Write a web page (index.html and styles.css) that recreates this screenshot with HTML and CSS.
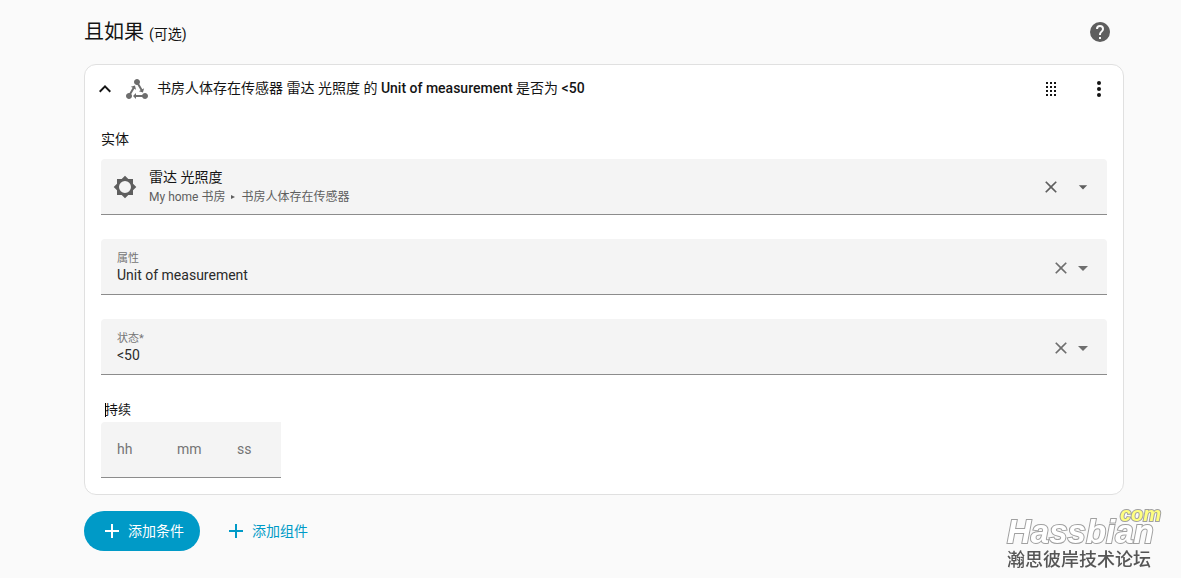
FILE: index.html
```
<!DOCTYPE html>
<html lang="zh-CN">
<head>
    <meta charset="utf-8">
    <title>且如果</title>
    <meta name="viewport" content="width=device-width, initial-scale=1">
    <link rel="stylesheet" href="styles.css">
</head>
<body>
    <main class="section">
        <header class="section-header">
            <h2>且如果 <small>(可选)</small></h2>
            <a class="icon-button help" href="#" aria-label="帮助">
                <svg viewBox="0 0 24 24"><path d="M15.07,11.25L14.17,12.17C13.45,12.89 13,13.5 13,15H11V14.5C11,13.39 11.45,12.39 12.17,11.67L13.41,10.41C13.78,10.05 14,9.55 14,9C14,7.89 13.1,7 12,7A2,2 0 0,0 10,9H8A4,4 0 0,1 12,5A4,4 0 0,1 16,9C16,9.88 15.64,10.67 15.07,11.25M13,19H11V17H13M12,2A10,10 0 0,0 2,12A10,10 0 0,0 12,22A10,10 0 0,0 22,12C22,6.47 17.5,2 12,2Z"/></svg>
            </a>
        </header>

        <section class="card">
            <div class="card-header">
                <button class="chevron" type="button" aria-label="收起">
                    <svg viewBox="0 0 24 24"><path d="M7.41,15.41L12,10.83L16.59,15.41L18,14L12,8L6,14L7.41,15.41Z"/></svg>
                </button>
                <svg class="condition-icon" viewBox="0 0 24 24"><path d="M6.27 17.05C6.72 17.58 7 18.25 7 19C7 20.66 5.66 22 4 22S1 20.66 1 19 2.34 16 4 16C4.18 16 4.36 16 4.53 16.05L7.6 10.69L5.86 9.7L9.95 8.58L11.07 12.67L9.33 11.68L6.27 17.05M20 16C18.7 16 17.6 16.84 17.18 18H11V16L8 19L11 22V20H17.18C17.6 21.16 18.7 22 20 22C21.66 22 23 20.66 23 19S21.66 16 20 16M12 8C12.18 8 12.36 8 12.53 7.95L15.6 13.31L13.86 14.3L17.95 15.42L19.07 11.33L17.33 12.32L14.27 6.95C14.72 6.42 15 5.75 15 5C15 3.34 13.66 2 12 2S9 3.34 9 5 10.34 8 12 8Z"/></svg>
                <h3>书房人体存在传感器 雷达 光照度 的 <b>Unit of measurement</b> 是否为 <b>&lt;50</b></h3>
                <button class="icon-button" type="button" aria-label="拖动">
                    <svg viewBox="0 0 24 24"><path d="M7 5h2v2H7zM11 5h2v2h-2zM15 5h2v2h-2zM7 9h2v2H7zM11 9h2v2h-2zM15 9h2v2h-2zM7 13h2v2H7zM11 13h2v2h-2zM15 13h2v2h-2zM7 17h2v2H7zM11 17h2v2h-2zM15 17h2v2h-2z"/></svg>
                </button>
                <button class="icon-button" type="button" aria-label="菜单">
                    <svg viewBox="0 0 24 24"><circle cx="12" cy="6" r="2"/><circle cx="12" cy="12" r="2"/><circle cx="12" cy="18" r="2"/></svg>
                </button>
            </div>

            <div class="card-content">
                <div class="group-label" id="entity-label">实体</div>
                <div class="field entity">
                    <button class="entity-value" type="button" aria-labelledby="entity-label entity-name">
                        <svg viewBox="0 0 24 24"><path d="M12,18A6,6 0 0,1 6,12A6,6 0 0,1 12,6A6,6 0 0,1 18,12A6,6 0 0,1 12,18M20,15.31L23.31,12L20,8.69V4H15.31L12,0.69L8.69,4H4V8.69L0.69,12L4,15.31V20H8.69L12,23.31L15.31,20H20V15.31Z"/></svg>
                        <span class="entity-text">
                            <span class="primary" id="entity-name">雷达 光照度</span>
                            <span class="secondary">My home 书房 <i></i> 书房人体存在传感器</span>
                        </span>
                    </button>
                    <button class="clear" type="button" aria-label="清除实体">
                        <svg viewBox="0 0 24 24"><path d="M19,6.41L17.59,5L12,10.59L6.41,5L5,6.41L10.59,12L5,17.59L6.41,19L12,13.41L17.59,19L19,17.59L13.41,12L19,6.41Z"/></svg>
                    </button>
                    <button class="toggle" type="button" aria-label="选择实体">
                        <svg viewBox="0 0 24 24"><path d="M7,10L12,15L17,10H7Z"/></svg>
                    </button>
                </div>

                <div class="field">
                    <div class="field-text">
                        <label for="attribute">属性</label>
                        <input id="attribute" type="text" value="Unit of measurement">
                    </div>
                    <button class="clear" type="button" aria-label="清除属性">
                        <svg viewBox="0 0 24 24"><path d="M19,6.41L17.59,5L12,10.59L6.41,5L5,6.41L10.59,12L5,17.59L6.41,19L12,13.41L17.59,19L19,17.59L13.41,12L19,6.41Z"/></svg>
                    </button>
                    <button class="toggle" type="button" aria-label="选择属性">
                        <svg viewBox="0 0 24 24"><path d="M7,10L12,15L17,10H7Z"/></svg>
                    </button>
                </div>

                <div class="field">
                    <div class="field-text">
                        <label for="state">状态*</label>
                        <input id="state" type="text" value="&lt;50">
                    </div>
                    <button class="clear" type="button" aria-label="清除状态">
                        <svg viewBox="0 0 24 24"><path d="M19,6.41L17.59,5L12,10.59L6.41,5L5,6.41L10.59,12L5,17.59L6.41,19L12,13.41L17.59,19L19,17.59L13.41,12L19,6.41Z"/></svg>
                    </button>
                    <button class="toggle" type="button" aria-label="选择状态">
                        <svg viewBox="0 0 24 24"><path d="M7,10L12,15L17,10H7Z"/></svg>
                    </button>
                </div>

                <label class="duration-label" for="hours">持续</label>
                <div class="duration">
                    <input id="hours" type="text" inputmode="numeric" placeholder="hh" aria-label="持续 时">
                    <input type="text" inputmode="numeric" placeholder="mm" aria-label="持续 分">
                    <input type="text" inputmode="numeric" placeholder="ss" aria-label="持续 秒">
                </div>
            </div>
        </section>

        <div class="actions">
            <button class="add filled" type="button">
                <svg viewBox="0 0 24 24"><path d="M19,13H13V19H11V13H5V11H11V5H13V11H19V13Z"/></svg>
                添加条件
            </button>
            <button class="add" type="button">
                <svg viewBox="0 0 24 24"><path d="M19,13H13V19H11V13H5V11H11V5H13V11H19V13Z"/></svg>
                添加组件
            </button>
        </div>
    </main>

    <aside class="watermark">
        <span class="site">Hassbian</span>
        <span class="tld">com</span>
        <span class="forum">瀚思彼岸技术论坛</span>
    </aside>
</body>
</html>
```
FILE: styles.css
```
* {
    box-sizing: border-box;
}
body {
    margin: 0;
    padding: 0 0 0 27px;
    background: #fafafa;
    color: #141414;
    font: 14px/20px Roboto, "Noto Sans CJK SC", sans-serif;
}
button, input {
    font: inherit;
    color: inherit;
    border: 0;
    padding: 0;
    background: none;
}
button {
    cursor: pointer;
}
svg {
    display: block;
    flex: none;
    width: 24px;
    height: 24px;
    fill: currentColor;
}
h2, h3 {
    margin: 0;
    font-weight: 400;
}
.section {
    max-width: 1040px;
    margin: 0 auto;
}
.section-header {
    display: flex;
    align-items: center;
    justify-content: space-between;
    height: 64px;
}
.section-header h2 {
    padding-top: 2px;
    font-size: 20px;
    line-height: 28px;
}
.section-header small {
    font-size: 14px;
}
.icon-button {
    display: flex;
    align-items: center;
    justify-content: center;
    width: 48px;
    height: 48px;
}
.help {
    color: #5e5e5e;
}
.card {
    background: #fff;
    border: 1px solid #e0e0e0;
    border-radius: 12px;
}
.card-header {
    display: flex;
    align-items: center;
    height: 48px;
    padding-left: 8px;
}
.card-header h3 {
    flex: 1;
    padding-bottom: 2px;
    font-size: 14px;
}
.card-header b {
    font-weight: 500;
}
.condition-icon {
    margin: 0 8px;
    color: #6e6e6e;
}
.card-content {
    padding: 16px;
}
.group-label {
    margin-bottom: 10px;
}
.field {
    display: flex;
    align-items: center;
    height: 56px;
    margin-bottom: 24px;
    padding: 0 12px 0 16px;
    background: #f4f4f4;
    border-bottom: 1px solid #8c8c8c;
    border-radius: 4px 4px 0 0;
    color: #2a2a2a;
}
.field-text {
    flex: 1;
    display: flex;
    flex-direction: column;
}
.field-text label {
    padding-top: 2px;
    font-size: 11px;
    line-height: 14px;
    color: #757575;
}
.field-text input {
    width: 100%;
    height: 18px;
    outline: 0;
}
.clear svg {
    width: 20px;
    height: 20px;
}
.clear, .toggle {
    padding-top: 3px;
    color: #6e6e6e;
}
.entity {
    padding-left: 12px;
}
.entity-value {
    flex: 1;
    display: flex;
    align-items: center;
    gap: 12px;
    text-align: left;
    color: #5e5e5e;
}
.entity-text, .entity-text > span {
    display: block;
}
.primary {
    color: #141414;
}
.secondary {
    font-size: 12px;
}
/* small arrow between the area and the device */
.secondary i {
    display: inline-block;
    margin: 0 3px;
    vertical-align: 2px;
    border: solid transparent;
    border-width: 2px 0 2px 4px;
    border-left-color: currentColor;
}
.entity .clear, .entity .toggle {
    padding-top: 0;
    color: #5e5e5e;
}
.entity .clear {
    margin-right: 10px;
}
.entity .toggle svg {
    width: 20px;
    height: 20px;
    margin: 0 2px;
}
.duration-label {
    position: relative;
    display: block;
    padding: 1px 0 0 4px;
    margin-bottom: 2px;
    font-size: 13px;
}
/* text caret */
.duration-label::before {
    content: "";
    position: absolute;
    left: 4px;
    top: 4px;
    width: 1px;
    height: 14px;
    background: #000;
}
.duration {
    display: inline-flex;
    vertical-align: top;
    height: 56px;
    padding: 0 0 1px 16px;
    background: #f4f4f4;
    border-bottom: 1px solid #8c8c8c;
    border-radius: 4px 0 0 0;
}
.duration input {
    width: 60px;
    outline: 0;
}
.duration input:last-child {
    width: 44px;
}
.duration input::placeholder {
    color: #757575;
}
.actions {
    display: flex;
    gap: 8px;
    padding: 16px 0;
}
.add {
    display: flex;
    align-items: center;
    gap: 4px;
    height: 40px;
    padding: 0 16px;
    border-radius: 20px;
    color: #009ac7;
}
.add.filled {
    background: #009ac7;
    color: #fff;
}
.watermark {
    position: fixed;
    right: 20px;
    bottom: 6px;
    width: 154px;
    font-family: "Liberation Sans", "Noto Sans CJK SC", sans-serif;
}
.watermark span {
    display: block;
}
.site, .tld {
    font-weight: 700;
    font-style: italic;
    color: #fff;
    -webkit-text-stroke: 2px #a0a0a0;
    paint-order: stroke fill;
}
.site {
    font-size: 33px;
    line-height: 32px;
}
.tld {
    position: absolute;
    right: 0;
    top: -12px;
    font-size: 20px;
    line-height: 20px;
    color: #ffff80;
}
.forum {
    font-size: 18px;
    line-height: 24px;
    font-weight: 500;
    color: #555;
}
```
